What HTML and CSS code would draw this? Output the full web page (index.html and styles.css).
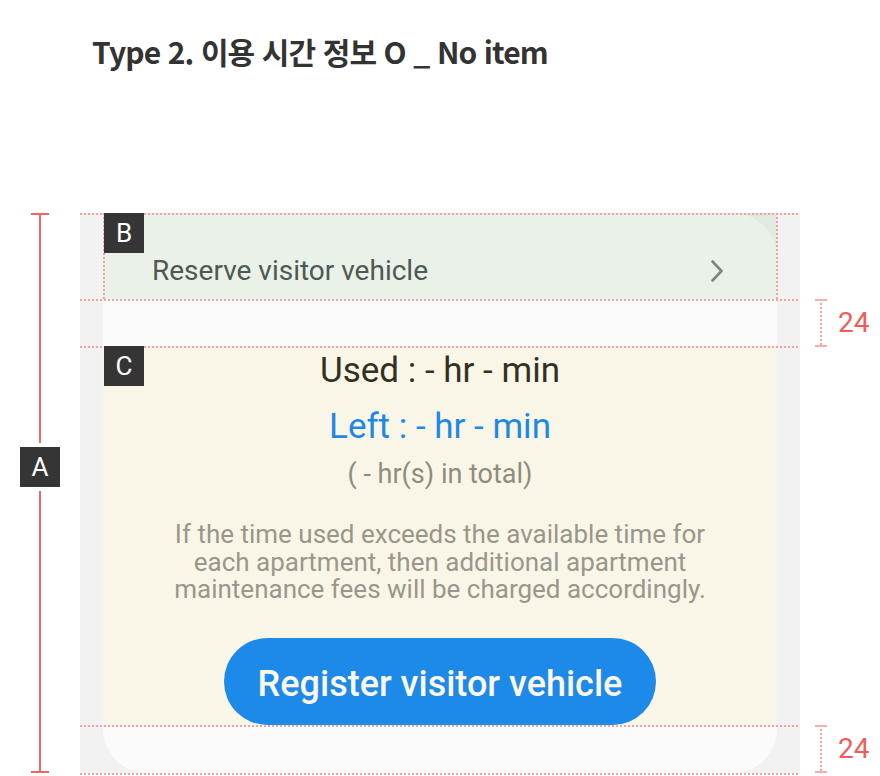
FILE: index.html
```html
<!DOCTYPE html>
<html lang="ko">
<head>
<meta charset="utf-8">
<title>Type 2</title>
<link rel="stylesheet" href="styles.css">
</head>
<body>
<h1 class="title">Type 2. 이용 시간 정보 O _ No item</h1>
<div class="spec">
  <div class="bracket-a">
    <span class="cap"></span>
    <span class="line line-top"></span>
    <span class="badge">A</span>
    <span class="line line-bottom"></span>
    <span class="cap"></span>
  </div>
  <div class="frame">
    <div class="card">
      <section class="sec sec-b">
        <span class="badge badge-corner">B</span>
        <span class="reserve-label">Reserve visitor vehicle</span>
        <svg class="chevron" width="14" height="24" viewBox="0 0 14 24" aria-hidden="true"><path d="M2.5 2.5 L11.5 12 L2.5 21.5" fill="none" stroke="#7d877f" stroke-width="2.6" stroke-linecap="round" stroke-linejoin="round"/></svg>
      </section>
      <div class="sec sec-gap"></div>
      <section class="sec sec-c">
        <span class="badge badge-corner">C</span>
        <p class="used">Used : - hr - min</p>
        <p class="left">Left : - hr - min</p>
        <p class="total">( - hr(s) in total)</p>
        <p class="note">If the time used exceeds the available time for<br>each apartment, then additional apartment<br>maintenance fees will be charged accordingly.</p>
        <button class="register" type="button">Register visitor vehicle</button>
      </section>
      <div class="sec sec-bottom"></div>
    </div>
  </div>
  <div class="measures">
    <div class="m-space m-space-b"></div>
    <div class="measure"><span class="m-bar"></span><span class="m-num">24</span></div>
    <div class="m-space m-space-c"></div>
    <div class="measure"><span class="m-bar"></span><span class="m-num">24</span></div>
  </div>
</div>
</body>
</html>
```

FILE: styles.css
```css
* { box-sizing: border-box; }

html, body {
  margin: 0;
  padding: 0;
  background: #ffffff;
}

body {
  width: 880px;
  height: 776px;
  overflow: hidden;
  font-family: Roboto, "Noto Sans", sans-serif;
}

.title {
  margin: 0;
  padding: 31px 0 0 92px;
  font-family: "Noto Sans CJK KR", "Noto Sans", sans-serif;
  font-weight: 700;
  font-size: 30px;
  line-height: 40px;
  color: #333333;
  letter-spacing: -0.9px;
}

.spec {
  display: flex;
  margin-top: 142px;
}

/* A bracket */
.bracket-a {
  width: 80px;
  display: flex;
  flex-direction: column;
  align-items: center;
}

.bracket-a .cap {
  width: 18px;
  height: 2px;
  background: #f06464;
}

.bracket-a .line {
  width: 2px;
  background: #f06464;
}

.bracket-a .line-top {
  height: 228px;
}

.bracket-a .line-bottom {
  flex: 1;
}

.badge {
  width: 40px;
  height: 40px;
  background: #353535;
  color: #ffffff;
  font-family: Roboto, sans-serif;
  font-size: 26px;
  line-height: 40px;
  text-align: center;
}

.bracket-a .badge {
  margin: 4px 0;
}

/* frame and card */
.frame {
  width: 720px;
  background: #f2f2f2;
}

.card {
  margin: 0 23px;
  background: #fbfbfb;
  border-radius: 44px;
}

.sec {
  position: relative;
}

.sec::before {
  content: "";
  position: absolute;
  left: -23px;
  right: -23px;
  top: 0;
  height: 2px;
  background: repeating-linear-gradient(90deg, #f7a0a0 0 2px, transparent 2px 4px);
  z-index: 3;
}

.badge-corner {
  position: absolute;
  top: 0;
  left: 1px;
  z-index: 4;
}

.sec-b {
  height: 86px;
  display: flex;
  align-items: center;
  padding: 29px 53px 0 49px;
  background: rgba(80, 160, 80, 0.1);
}

.sec-b::after {
  content: "";
  position: absolute;
  left: 0;
  right: -1px;
  top: 0;
  bottom: 0;
  background:
    repeating-linear-gradient(180deg, #f7a0a0 0 2px, transparent 2px 4px) left top / 2px 100% no-repeat,
    repeating-linear-gradient(180deg, #f7a0a0 0 2px, transparent 2px 4px) right top / 2px 100% no-repeat;
  z-index: 2;
}

.reserve-label {
  font-size: 28px;
  line-height: 34px;
  color: #4f5951;
}

.chevron {
  margin-left: auto;
  display: block;
}

.sec-gap {
  height: 47px;
}

.sec-c {
  height: 379px;
  background: #f9f6e8;
  display: flex;
  flex-direction: column;
  align-items: center;
  text-align: center;
  padding-top: 5px;
}

.sec-c p {
  margin: 0;
}

.used {
  font-size: 35px;
  line-height: 40px;
  color: #33301f;
}

.left {
  margin-top: 16px !important;
  font-size: 35px;
  line-height: 40px;
  color: #1e88e5;
}

.total {
  margin-top: 11px !important;
  font-size: 27px;
  line-height: 32px;
  color: #8f8c7d;
}

.note {
  margin-top: 31px !important;
  font-size: 26px;
  line-height: 27.5px;
  color: #9a968a;
}

.register {
  margin-top: auto;
  width: 432px;
  height: 87px;
  border: none;
  border-radius: 44px;
  background: #1d89e8;
  color: #fbf7ea;
  font-family: Roboto, sans-serif;
  font-weight: 500;
  font-size: 36px;
  padding: 4px 0 0;
}

.sec-bottom {
  height: 48px;
}

.sec-bottom::after {
  content: "";
  position: absolute;
  left: -23px;
  right: -23px;
  bottom: -2px;
  height: 2px;
  background: repeating-linear-gradient(90deg, #f7a0a0 0 2px, transparent 2px 4px);
}

/* right measures */
.measures {
  width: 80px;
  display: flex;
  flex-direction: column;
}

.m-space-b {
  height: 86px;
}

.m-space-c {
  height: 378px;
}

.measure {
  height: 48px;
  display: flex;
  align-items: center;
  padding-left: 15px;
}

.m-bar {
  width: 12px;
  height: 48px;
  background:
    linear-gradient(#f9aeae, #f9aeae) left top / 12px 2px no-repeat,
    linear-gradient(#f9aeae, #f9aeae) left bottom / 12px 2px no-repeat,
    repeating-linear-gradient(180deg, #f7a0a0 0 2px, transparent 2px 4px) center top / 2px 100% no-repeat;
}

.m-num {
  margin-left: 11px;
  font-size: 28px;
  line-height: 32px;
  color: #f55a5a;
}
```
